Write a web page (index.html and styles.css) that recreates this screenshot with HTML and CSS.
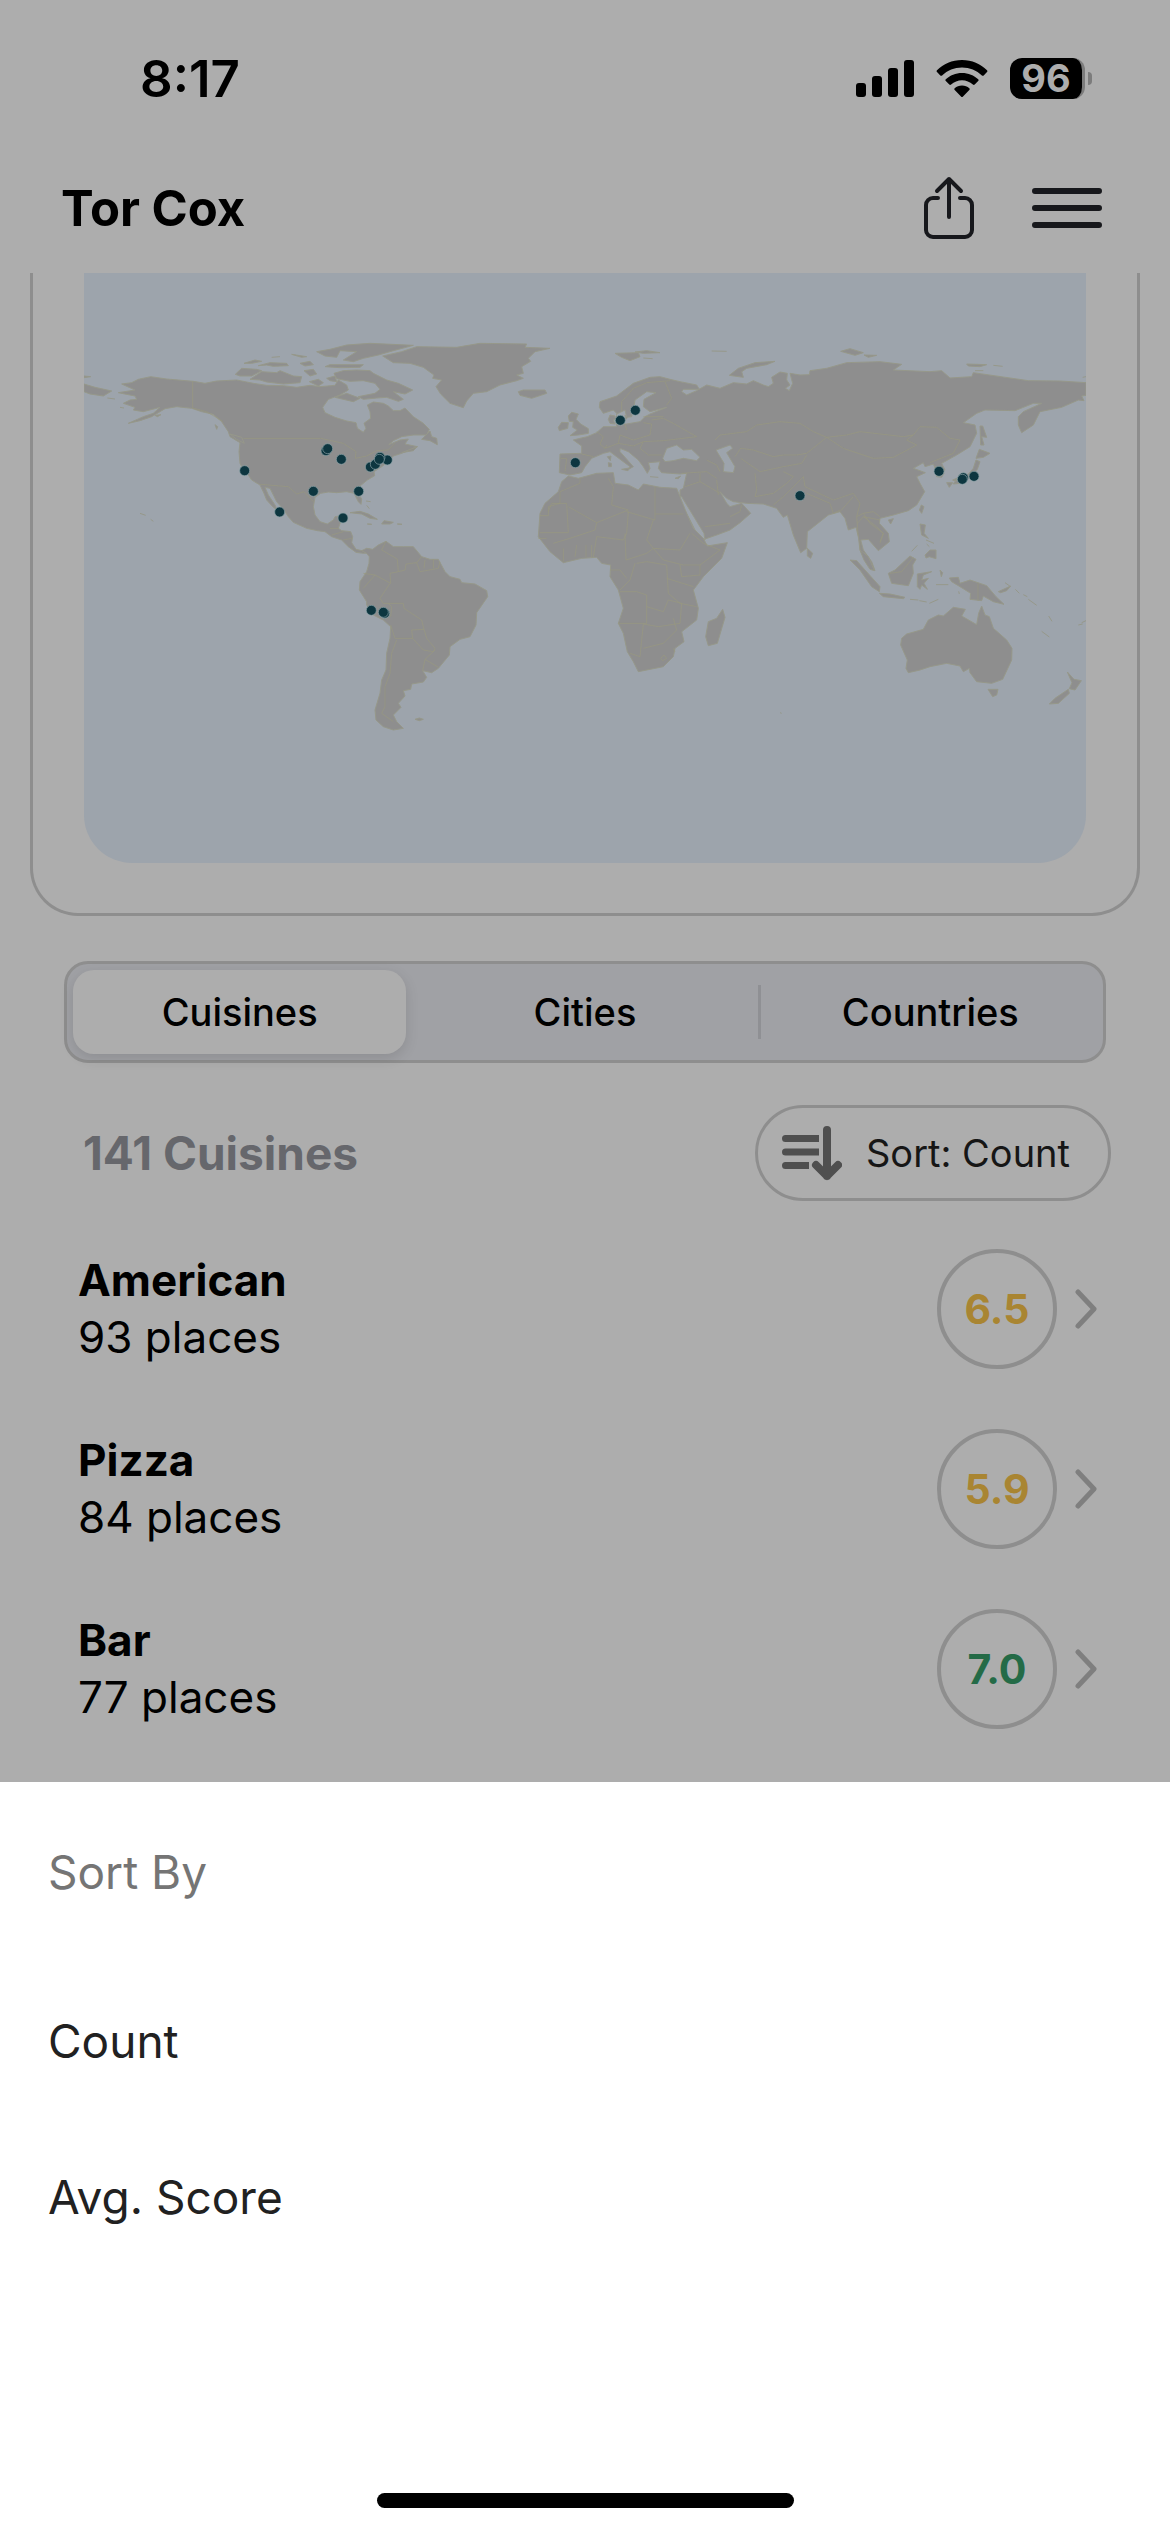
FILE: index.html
```html
<!DOCTYPE html>
<html lang="en">
<head>
<meta charset="utf-8">
<meta name="viewport" content="width=device-width, initial-scale=1">
<title>Tor Cox</title>
<link rel="stylesheet" href="styles.css">
</head>
<body>
<div class="app">
  <div class="status-bar">
    <span class="status-time">8:17</span>
    <div class="status-icons">
      <svg class="icon-signal" viewBox="0 0 58 38" aria-hidden="true">
        <rect x="0" y="24" width="10" height="14" rx="3"/>
        <rect x="16" y="17" width="10" height="21" rx="3"/>
        <rect x="32" y="9" width="10" height="29" rx="3"/>
        <rect x="48" y="1" width="10" height="37" rx="3"/>
      </svg>
      <svg class="icon-wifi" viewBox="0 0 52 38" aria-hidden="true">
        <path d="M26 1C16 1 7.500 4.800 1 11.200c-.6.600-.6 1.200 0 1.800l3.300 3.400c.6.600 1.200.6 1.800 0C11.500 11.300 18.300 8.400 26 8.400s14.500 2.900 19.900 8c.6.600 1.200.6 1.800 0L51 13c.6-.6.6-1.200 0-1.800C44.500 4.800 36 1 26 1z"/>
        <path d="M26 14c-6.300 0-12 2.400-16.200 6.300-.6.600-.6 1.200 0 1.800l3.500 3.500c.6.600 1.200.6 1.800 0 3-2.800 6.800-4.400 10.900-4.400s7.900 1.600 10.900 4.400c.6.600 1.200.6 1.800 0l3.500-3.500c.6-.6.6-1.200 0-1.800C38 16.400 32.300 14 26 14z"/>
        <path d="M26 26.500c-2.800 0-5.400 1-7.300 2.700-.6.600-.6 1.200 0 1.800l6.300 6.400c.7.700 1.300.7 2 0l6.300-6.400c.6-.6.6-1.200 0-1.800-1.900-1.700-4.500-2.700-7.300-2.700z"/>
      </svg>
      <div class="battery"><span class="battery-level">96</span><span class="battery-tip"></span></div>
    </div>
  </div>

  <header class="header">
    <h1 class="title">Tor Cox</h1>
    <div class="header-actions">
      <button class="icon-button" type="button" aria-label="Share">
        <svg class="icon-share" viewBox="0 0 50 64">
          <path d="M14 22H9a7 7 0 0 0-7 7v25a7 7 0 0 0 7 7h32a7 7 0 0 0 7-7V29a7 7 0 0 0-7-7h-5M25 3v38M13 15 25 3l12 12"/>
        </svg>
      </button>
      <button class="icon-button" type="button" aria-label="Menu">
        <svg class="icon-menu" viewBox="0 0 70 42">
          <path d="M3 4h64M3 21h64M3 38h64"/>
        </svg>
      </button>
    </div>
  </header>

  <main>
    <section class="map-card">
      <svg class="map" viewBox="12 -141 3006 1770" preserveAspectRatio="xMidYMid slice" role="img" aria-label="Map of places visited">
        <g class="land">
          <!-- North and Central America -->
          <path d="M125 192 155 188 175 178 212 170 260 177 340 184 375 190 410 183 470 180 500 186 520 190 560 196 610 197 650 202 690 196 720 200 765 196 775 180 800 195 805 210 780 225 745 238 728 262 735 278 765 292 800 303 828 308 832 325 850 337 858 325 852 310 872 295 870 275 862 255 880 246 910 250 925 258 940 272 960 272 975 264 1000 290 1030 310 1048 328 1040 345 1000 345 965 350 940 362 926 374 960 360 985 357 975 372 1012 380 965 400 940 408 925 425 905 440 882 455 884 467 862 480 840 498 832 515 845 537 843 553 835 545 822 520 800 515 770 518 745 516 722 520 705 532 700 560 705 585 720 605 742 612 760 600 765 590 795 586 782 605 775 625 785 632 812 635 818 650 815 668 828 688 850 693 868 686 872 698 850 700 828 697 805 680 785 660 755 650 735 635 712 632 680 625 640 607 625 590 612 570 590 545 570 505 555 502 565 525 585 555 592 570 580 562 560 540 552 520 540 495 515 480 505 465 490 450 480 430 477 395 480 368 450 350 445 335 425 305 400 283 365 275 335 265 290 260 255 266 215 290 180 302 145 310 190 290 220 280 240 262 190 275 160 270 165 262 130 250 150 240 170 238 165 228 115 218 165 210Z"/>
          <path d="M12 192 45 202 95 213 70 228 30 222 12 215ZM12 168 32 170 12 173ZM82 234 105 237M120 262 132 264M225 286 243 284 232 290Z"/>
          <path d="M405 314 413 320 410 328ZM450 342 485 352 493 370 470 358Z"/>
          <path d="M466 163 485 145 530 148 545 152 515 168 480 168Z"/>
          <path d="M510 178 545 155 590 158 600 152 640 168 665 170 660 188 610 192 560 186 540 180Z"/>
          <path d="M492 130 525 120 545 124 515 130ZM535 137 570 128 620 130 625 137 580 139 560 135ZM635 103 680 110 665 112ZM660 130 690 124 700 134 675 138ZM672 152 700 148 710 162 690 168ZM735 140 750 134 850 134 840 142 780 143ZM575 112 600 110"/>
          <path d="M710 95 750 88 800 75 870 70 1000 76 940 92 895 105 850 115 820 125 790 120 830 95 780 92 770 112 735 108Z"/>
          <path d="M688 185 715 178 730 188 715 198ZM740 175 765 168 770 185 750 182Z"/>
          <path d="M762 160 790 152 830 150 870 152 880 160 920 180 955 190 998 210 975 222 940 215 970 238 955 244 920 232 890 234 850 238 835 230 885 220 900 208 885 190 850 182 810 184 770 176Z"/>
          <path d="M765 232 800 220 840 235 820 245Z"/>
          <path d="M1050 333 1025 358 1050 362 1072 374 1070 355 1055 350ZM965 398 1012 380 1000 392Z"/>
          <path d="M908 108 965 95 1010 80 1130 82 1200 70 1340 72 1335 82 1410 85 1365 95 1345 115 1352 124 1325 140 1330 160 1310 165 1330 175 1310 182 1260 195 1220 215 1180 220 1160 243 1150 263 1110 250 1082 222 1068 200 1085 180 1058 175 1062 165 1030 142 990 130 940 128Z"/>
          <!-- Caribbean and Hawaii -->
          <path d="M810 578 840 574 865 582 892 598 870 595 845 582ZM905 612 912 602 940 607 930 612ZM862 612 875 613ZM952 612 966 613ZM858 543 872 545M860 556 868 566M180 580 197 586M212 598 220 604"/>
          <!-- South America -->
          <g transform="translate(420 300)">
            <path d="M425 392 440 385 458 388 475 375 498 364 520 380 550 380 580 380 605 410 630 418 655 418 675 455 690 470 720 478 725 488 765 492 800 512 803 530 770 578 768 615 750 650 720 658 690 680 688 705 655 745 635 758 608 752 620 772 610 786 575 792 572 808 550 812 555 828 535 850 543 862 520 885 530 905 550 925 520 930 490 920 468 900 465 870 480 820 485 780 498 750 500 700 510 655 512 620 490 600 460 585 440 555 440 545 418 510 420 485 440 455 447 430 448 410 440 400Z"/>
            <path d="M585 898 598 894 610 898 598 902Z"/>
          </g>
          <!-- Europe and Asia -->
          <g transform="translate(1260 0)">
            <path d="M55 215 70 210 135 210 140 220 95 235 60 226ZM345 100 415 98 420 110 390 122 365 112ZM405 96 440 92 480 98 430 100ZM430 114 458 116M635 93 680 94M688 166 715 145 765 128 825 124 800 134 740 145 725 155 730 172Z"/>
            <path d="M205 288 215 277 235 282 228 298 242 312 265 326 265 340 235 345 210 347 232 330 218 322 220 305 208 304ZM175 322 185 307 205 308 203 325 178 332Z"/>
            <path d="M1758 188 1680 183 1585 182 1420 158 1415 170 1350 174 1325 152 1290 155 1180 150 1205 133 1140 125 1040 128 980 145 930 152 928 164 900 165 870 160 878 190 868 212 856 205 870 195 860 180 862 160 840 156 815 172 820 190 805 200 790 195 760 182 740 192 700 188 660 205 620 195 590 212 560 225 545 215 550 208 598 208 590 195 540 185 510 178 480 170 450 172 400 190 350 228 300 245 298 262 310 280 340 270 352 282 355 295 340 300 345 312 330 310 325 298 330 285 345 288 350 320 310 320 290 338 262 350 240 355 220 360 245 378 245 400 180 402 178 458 210 465 245 458 255 440 275 415 310 400 330 395 350 410 390 440 382 450 400 440 360 395 360 385 385 395 415 420 430 440 442 460 450 445 445 428 480 425 475 445 485 458 540 462 560 460 550 505 540 510 540 530 570 575 612 658 650 645 690 630 720 608 752 580 725 550 690 560 680 550 660 515 680 535 700 545 740 550 790 552 830 565 850 592 862 585 880 645 902 698 920 685 922 635 985 585 1020 575 1035 595 1045 630 1068 622 1075 650 1080 690 1100 730 1125 752 1115 725 1090 690 1082 660 1105 658 1120 675 1135 692 1168 665 1165 640 1138 610 1140 595 1180 585 1225 572 1250 555 1274 515 1260 490 1250 470 1276 458 1240 445 1270 428 1275 440 1300 432 1310 455 1322 465 1335 450 1325 430 1370 405 1410 380 1430 340 1425 315 1390 308 1430 280 1455 270 1545 272 1600 250 1625 250 1570 275 1555 290 1555 315 1565 338 1600 315 1620 275 1685 262 1735 240 1752 242 1745 228 1758 226Z"/>
            <path class="water" d="M350 282 375 270 380 292 395 290 400 270 405 240 440 215 468 218 432 238 430 260 450 275 500 262 450 282 435 290 420 305 380 312 350 312ZM488 415 500 385 530 375 550 390 575 388 600 412 590 422 550 415 520 422 495 425ZM648 390 690 375 698 385 680 398 705 440 700 458 670 455 672 430ZM530 525 545 530 612 640 615 660 590 640 570 600Z"/>
            <path d="M325 428 334 430 334 440 326 440ZM322 410 333 408 331 422ZM365 448 388 444 384 452ZM450 470 475 472M525 475 542 468 535 476ZM375 285 382 293 378 298Z"/>
            <!-- Africa and Madagascar -->
            <path d="M205 468 235 475 290 460 340 458 345 490 385 495 415 510 430 492 480 502 530 505 540 530 560 580 580 625 610 655 622 678 682 668 665 715 610 770 580 810 595 865 590 900 545 935 552 965 525 985 520 1010 490 1040 415 1055 400 1025 382 995 370 940 355 910 370 865 355 810 330 770 332 735 305 730 290 712 245 715 190 728 150 695 115 650 120 580 135 550 175 515 185 485Z"/>
            <path d="M668 868 675 892 652 970 625 977 617 950 625 905 650 895Z"/>
            <path d="M840 1178 845 1180"/>
          </g>
          <!-- East Asia, Indonesia and Oceania -->
          <g transform="translate(2100 0)">
            <path d="M182 94 210 86 250 98 225 106ZM252 105 290 106 265 112ZM560 132 620 134 600 140 565 138ZM640 136 668 139M585 152 610 152M908 172 918 170"/>
            <path d="M600 318 608 318 620 352 605 350 612 375 602 375ZM598 388 630 400 610 412 588 415ZM588 420 600 425 592 448 575 465 560 480 540 490 520 492 530 478 565 462 580 445ZM500 488 518 488 508 502ZM518 480 532 474 528 484Z"/>
            <path d="M465 440 485 440 492 460 485 472 470 470ZM424 555 432 560 425 580 418 570ZM325 600 340 596 332 612ZM82 685 98 700 92 715 82 708ZM420 612 436 615 432 640 445 655 425 645ZM438 660 462 670M440 672 448 680M435 705 450 690 468 690 468 716 448 710 438 714ZM395 694 412 676"/>
            <path d="M210 720 230 722 255 750 300 800 298 815 275 800 240 750ZM240 690 265 710 283 752 270 748 252 720ZM298 820 330 822 375 832 370 836 310 830ZM325 760 345 750 390 708 408 718 398 735 400 760 385 797 335 790ZM412 762 455 755 430 765 425 780 445 775 432 790 442 808 425 795 420 808 412 800ZM480 750 488 758 484 770ZM390 838 415 840M418 842 440 846M448 850 475 838M468 794 505 794M536 814 538 822"/>
            <path d="M508 774 535 772 540 790 570 780 620 797 648 830 672 853 640 845 610 828 605 842 570 838 572 820 540 800 515 785ZM655 815 692 798 680 812 662 818ZM675 788 692 800M706 808 718 820M730 824 742 830M745 838 770 856M806 888 816 904M785 934 808 951M895 915 908 912M905 908 918 902"/>
            <path d="M365 955 380 942 430 928 445 900 475 885 490 888 520 862 556 868 545 888 590 914 596 880 605 858 615 885 628 890 640 925 680 960 696 985 695 1020 668 1078 635 1090 590 1085 570 1058 568 1045 550 1055 540 1038 500 1030 450 1040 420 1050 385 1058 378 1045 382 1020 362 975ZM624 1108 654 1108 650 1125 638 1130Z"/>
            <path d="M862 1056 882 1078 904 1082 885 1110 868 1106 876 1088ZM865 1108 868 1120 835 1150 808 1152 825 1135Z"/>
          </g>
        </g>
        <g class="frontiers">
          <path d="M338 184V264L380 275 430 305M490 355H722L790 370 828 395 826 415 860 408 890 392 925 390 945 370M540 493 625 500 650 522 672 515 700 545M750 625 775 625M755 645 790 635M790 660 815 655"/>
          <g transform="translate(420 300)">
            <path d="M498 364 485 390 520 410 532 418 535 455 555 450 558 432 590 428 605 410M590 428 600 455 655 445 660 425M615 420 612 445M640 418V445M535 455 510 460 512 490 465 465 430 460M430 505 465 465M510 490 480 535 490 550 550 550 552 565 605 600 612 628 575 630 578 655 525 655 512 615M512 590 515 560 505 550M612 628 620 655 645 685 640 695 610 690 578 655M645 690 615 718 655 742M615 718 608 752M530 660 515 700 510 760 495 800 495 860 485 880 520 905"/>
          </g>
          <g transform="translate(1260 0)">
            <path d="M365 275 365 245 400 205 440 188 510 182M495 185 515 235 500 255M182 415 200 415 195 455M245 402 280 410M290 335 310 350 300 372 315 385 355 370 360 345 400 360 450 345 455 312 430 308M375 312 380 330M355 370 400 378 430 365 490 362 590 350 555 330 520 310 490 295 455 300M430 365 420 385 445 405 485 405M315 385 320 375M430 290 490 290M620 420 650 435 660 455M545 460 620 455 650 475M645 360 660 345 740 335 770 315 840 305 900 310 940 335 980 352 1040 345 1080 335 1210 350 1240 345 1260 320 1310 322 1350 355 1380 360 1360 400 1290 428M980 352 1030 385 1120 415 1180 412 1250 375 1220 360 1240 345M705 410 722 385 760 390 820 410 850 405 890 405 920 400 980 352M722 415 780 455 850 440 905 430 920 405M765 460 770 510 765 530 820 520 860 490 880 470 850 455M650 480 655 525M600 460 600 485 660 520M555 500 600 485M690 590 720 575 725 555M615 620 690 610M820 555 850 530 880 500 910 470 915 500 1000 540 1060 520 1080 550 1070 590 1090 580 1120 575 1140 590M920 520 990 550 1000 580 1020 570M1020 575 1060 530M1070 590 1075 650M1090 580 1110 610 1150 640 1140 670"/>
            <path d="M120 587H145V560L180 550V515L240 490V475M145 575 155 550H200L205 638H120M205 560 290 608 385 570 335 555 340 500 325 475M290 608 285 630 210 655 160 670M385 575 380 640 370 660 290 650 280 712M380 575 465 600V500M465 582H550M460 600 440 660 460 685 540 690 570 640M375 640 378 720 440 700 460 685 490 720 550 735 600 735 660 690 610 670 575 640M405 730 390 780 360 810M410 730 440 725 500 735 505 820 540 850 590 860M360 815 410 815 440 825 440 910H355M440 860 490 875 505 840 545 850 540 910 475 920 430 912 420 1010 390 1000M430 985 490 970 530 930 520 895M500 775 580 800M540 735 545 770 600 765V735M190 725 190 685M225 710 230 675M258 712V675M275 712V675M115 655H140M330 750 360 750 380 775M482 1015 492 1005 500 1015 488 1022ZM520 985 525 995"/>
          </g>
          <g transform="translate(2100 0)">
            <path d="M594 790V842M330 760 365 755 400 712M240 690V660M250 590 290 620 310 640 300 665M232 610 250 590 300 600"/>
          </g>
        </g>
        <g class="pins">
          <circle cx="738" cy="392" r="15"/><circle cx="743" cy="386" r="15"/><circle cx="784" cy="418" r="15"/>
          <circle cx="494" cy="452" r="15"/><circle cx="700" cy="514" r="15"/><circle cx="836" cy="514" r="15"/>
          <circle cx="599" cy="576" r="15"/><circle cx="789" cy="594" r="15"/><circle cx="871" cy="441" r="15"/>
          <circle cx="886" cy="433" r="15"/><circle cx="922" cy="420" r="15"/><circle cx="900" cy="412" r="15"/><circle cx="898" cy="418" r="15"/>
          <circle cx="874" cy="871" r="15"/><circle cx="914" cy="880" r="15"/><circle cx="910" cy="877" r="15"/>
          <circle cx="1486" cy="428" r="15"/><circle cx="1621" cy="301" r="15"/><circle cx="1666" cy="271" r="15"/>
          <circle cx="2160" cy="527" r="15"/><circle cx="2577" cy="454" r="15"/><circle cx="2650" cy="473" r="15"/>
          <circle cx="2647" cy="478" r="15"/><circle cx="2682" cy="469" r="15"/>
        </g>
      </svg>
    </section>

    <div class="segments" role="radiogroup" aria-label="Group by">
      <label class="segment"><input class="segment-input" type="radio" name="group" checked><span class="segment-label">Cuisines</span></label>
      <label class="segment"><input class="segment-input" type="radio" name="group"><span class="segment-label">Cities</span></label>
      <label class="segment segment-divided"><input class="segment-input" type="radio" name="group"><span class="segment-label">Countries</span></label>
    </div>

    <div class="list-header">
      <h2 class="list-title">141 Cuisines</h2>
      <button class="sort-button" type="button">
        <svg class="icon-sort" viewBox="0 0 60 56" aria-hidden="true">
          <path class="sort-lines" d="M37 10H3.500a3.500 3.500 0 0 0 0 7H37zM37 23.500H3.500a3.500 3.500 0 0 0 0 7H37zM27 37H3.500a3.500 3.500 0 0 0 0 7H27z"/>
          <path class="sort-arrow" d="M45 5v46M34 40l11 11 11-11"/>
        </svg>
        <span>Sort: Count</span>
      </button>
    </div>

    <ul class="list">
      <li>
        <a class="row" href="#american">
          <span class="row-text"><strong class="row-name">American</strong><span>93 places</span></span>
          <span class="score score-mid">6.5</span>
          <svg class="icon-chevron" viewBox="0 0 22 40" aria-hidden="true"><path d="M3 3 19 20 3 37"/></svg>
        </a>
      </li>
      <li>
        <a class="row" href="#pizza">
          <span class="row-text"><strong class="row-name">Pizza</strong><span>84 places</span></span>
          <span class="score score-mid">5.9</span>
          <svg class="icon-chevron" viewBox="0 0 22 40" aria-hidden="true"><path d="M3 3 19 20 3 37"/></svg>
        </a>
      </li>
      <li>
        <a class="row" href="#bar">
          <span class="row-text"><strong class="row-name">Bar</strong><span>77 places</span></span>
          <span class="score score-high">7.0</span>
          <svg class="icon-chevron" viewBox="0 0 22 40" aria-hidden="true"><path d="M3 3 19 20 3 37"/></svg>
        </a>
      </li>
    </ul>
  </main>

  <section class="sheet" aria-labelledby="sheet-title">
    <h2 class="sheet-title" id="sheet-title">Sort By</h2>
    <button class="sheet-option" type="button">Count</button>
    <button class="sheet-option" type="button">Avg. Score</button>
    <div class="home-indicator"></div>
  </section>
</div>
</body>
</html>
```
FILE: styles.css
```css
* {
  box-sizing: border-box;
}

:root {
  --surface: #adadad;
  --line: #8e8e8e;
  --ink: #17181c;
}

body {
  margin: 0;
  background: var(--surface);
  color: #000;
  font-family: Inter, "Liberation Sans", sans-serif;
  font-size: 44px;
  line-height: 57px;
}

h1,
h2,
ul {
  margin: 0;
  padding: 0;
}

button {
  padding: 0;
  border: 0;
  background: none;
  color: inherit;
  font: inherit;
  cursor: pointer;
}

svg {
  display: block;
}

.app {
  display: flex;
  flex-direction: column;
  min-height: 100vh;
}

/* Status bar */
.status-bar {
  display: flex;
  align-items: center;
  justify-content: space-between;
  height: 156px;
  padding: 0 78px 0 140px;
}

.status-time {
  font-size: 51px;
  font-weight: 600;
}

.status-icons {
  display: flex;
  align-items: center;
  gap: 22px;
}

.icon-signal {
  width: 58px;
  height: 38px;
}

.icon-wifi {
  width: 52px;
  height: 38px;
}

.battery {
  display: flex;
  align-items: center;
  gap: 3px;
}

.battery-level {
  width: 75px;
  border-right: 3px solid #7c7c7c;
  border-radius: 12px;
  background: #000;
  color: var(--surface);
  font-size: 38px;
  font-weight: 700;
  line-height: 41px;
  text-align: center;
}

.battery-tip {
  width: 4px;
  height: 13px;
  border-radius: 0 4px 4px 0;
  background: #7c7c7c;
}

/* Header */
.header {
  display: flex;
  align-items: center;
  justify-content: space-between;
  height: 104px;
  margin-bottom: 13px;
  padding: 0 68px 0 61px;
}

.title {
  font-size: 49px;
  font-weight: 700;
}

.header-actions {
  display: flex;
  align-items: center;
  gap: 58px;
}

.icon-share,
.icon-menu {
  fill: none;
  stroke: var(--ink);
  stroke-linecap: round;
  stroke-linejoin: round;
}

.icon-share {
  width: 50px;
  height: 64px;
  stroke-width: 4;
}

.icon-menu {
  width: 70px;
  height: 42px;
  stroke-width: 6;
}

/* Map */
.map-card {
  margin: 0 30px 45px;
  padding: 0 51px 50px;
  border: 3px solid var(--line);
  border-top: 0;
  border-radius: 0 0 48px 48px;
}

.map {
  width: 100%;
  aspect-ratio: 1002 / 590;
  border-radius: 0 0 48px 48px;
  background: #9da4ac;
}

.land {
  fill: #8e8e8e;
  stroke: #96988a;
  stroke-width: 3;
  stroke-linejoin: round;
}

.water {
  fill: #9da4ac;
}

.frontiers {
  fill: none;
  stroke: #98987f;
  stroke-width: 2;
  stroke-linejoin: round;
}

.pins {
  fill: #0d3640;
  stroke: #8ba3a8;
  stroke-width: 2;
}

/* Segmented control */
.segments {
  display: grid;
  grid-template-columns: repeat(3, 1fr);
  height: 102px;
  margin: 0 64px 42px;
  border: 3px solid var(--line);
  border-radius: 24px;
  background: #a0a1a5;
  font-size: 38px;
  font-weight: 500;
}

.segment {
  position: relative;
  display: flex;
  padding: 6px;
}

.segment-divided::before {
  position: absolute;
  top: 21px;
  bottom: 21px;
  left: 0;
  width: 3px;
  background: #8f9094;
  content: "";
}

.segment-input {
  position: absolute;
  opacity: 0;
}

.segment-label {
  display: flex;
  flex: 1;
  align-items: center;
  justify-content: center;
  border-radius: 21px;
}

.segment-input:checked + .segment-label {
  background: var(--surface);
  box-shadow: 0 4px 14px rgba(0, 0, 0, 0.12);
}

/* List */
.list-header {
  display: flex;
  align-items: center;
  justify-content: space-between;
  margin-bottom: 18px;
  padding: 0 59px 0 83px;
}

.list-title {
  color: #66676c;
  font-size: 46px;
  font-weight: 700;
}

.sort-button {
  display: flex;
  align-items: center;
  gap: 24px;
  height: 96px;
  padding: 0 38px 0 24px;
  border: 3px solid var(--line);
  border-radius: 48px;
  color: #161616;
  font-size: 38px;
}

.icon-sort {
  width: 60px;
  height: 56px;
}

.sort-lines {
  fill: #4f4f4f;
}

.sort-arrow {
  fill: none;
  stroke: #4f4f4f;
  stroke-width: 8;
  stroke-linecap: round;
  stroke-linejoin: round;
}

.list {
  padding-bottom: 23px;
  list-style: none;
}

.row {
  display: flex;
  align-items: center;
  gap: 18px;
  height: 180px;
  padding: 0 73px 0 78px;
  color: inherit;
  text-decoration: none;
}

.row-text {
  display: flex;
  flex: 1;
  flex-direction: column;
}

.row-name {
  font-weight: 700;
}

.score {
  display: flex;
  align-items: center;
  justify-content: center;
  width: 120px;
  height: 120px;
  border: 4px solid var(--line);
  border-radius: 50%;
  font-size: 41px;
  font-weight: 700;
}

.score-mid {
  color: #a98532;
}

.score-high {
  color: #246b47;
}

.icon-chevron {
  width: 22px;
  height: 40px;
  fill: none;
  stroke: #7f7f7f;
  stroke-width: 5;
  stroke-linecap: round;
  stroke-linejoin: round;
}

/* Sort sheet */
.sheet {
  display: flex;
  flex: 1;
  flex-direction: column;
  padding-bottom: 24px;
  background: #fff;
  color: #212121;
  font-size: 46px;
}

.sheet-title {
  padding: 62px 48px;
  color: #757575;
  font-size: 46px;
  font-weight: 400;
}

.sheet-option {
  height: 156px;
  padding: 0 48px;
  text-align: left;
}

.home-indicator {
  width: 417px;
  height: 15px;
  margin: auto auto 0;
  border-radius: 8px;
  background: #000;
}
```
